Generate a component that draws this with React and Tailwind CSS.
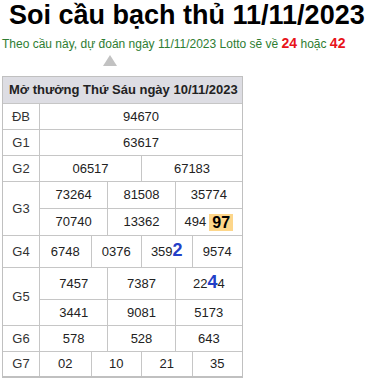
import React from "react";

const font = { fontFamily: '"Liberation Sans", Arial, sans-serif' };

function Cell({ children, first }) {
  return (
    <div
      className={
        "flex items-center justify-center text-[13px] text-[#222] " +
        (first ? "" : "border-l border-[#c6c6c6]")
      }
    >
      {children}
    </div>
  );
}

function Label({ children }) {
  return (
    <div className="w-[37px] shrink-0 border-r border-[#c6c6c6] flex items-center justify-center text-[13px] text-[#333]">
      {children}
    </div>
  );
}

function SubRow({ cols, items, h, top }) {
  const grid = { 1: "grid-cols-1", 2: "grid-cols-2", 3: "grid-cols-3", 4: "grid-cols-4" }[cols];
  return (
    <div
      className={
        "grid " + grid + " " + h + (top ? " border-t border-[#c6c6c6]" : "")
      }
    >
      {items.map((it, i) => (
        <Cell key={i} first={i === 0}>
          {it}
        </Cell>
      ))}
    </div>
  );
}

function Row({ label, cols, items, h }) {
  return (
    <div className={"flex border-t border-[#c6c6c6] " + h}>
      <Label>{label}</Label>
      <div className="flex-1">
        <SubRow cols={cols} items={items} h="h-full" />
      </div>
    </div>
  );
}

const Big = ({ children }) => (
  <span className="text-[18px] font-bold text-[#2340c8] leading-none">{children}</span>
);

export default function App() {
  return (
    <div className="bg-white w-[373px] h-[383px] overflow-hidden" style={font}>
      <div className="h-[30px] leading-[30px] text-[27px] font-bold text-black pl-[9px] whitespace-nowrap">
        Soi cầu bạch thủ 11/11/2023
      </div>
      <div className="mt-[2px] h-[22px] leading-[22px] text-[12px] text-[#2e7d32] pl-[2px] whitespace-nowrap">
        Theo cầu này, dự đoán ngày 11/11/2023 Lotto sẽ về{" "}
        <span className="text-[14px] font-bold text-[#e8141a]">24</span> hoặc{" "}
        <span className="text-[14px] font-bold text-[#e8141a]">42</span>
      </div>
      <div className="mt-[1px] ml-[103px] w-0 h-0 border-l-[7px] border-r-[7px] border-b-[11px] border-l-transparent border-r-transparent border-b-[#c2c2c2]" />
      <div className="mt-[10px] ml-[2px] w-[241px] border border-b-2 border-[#c0c0c0]">
        <div className="h-[26px] bg-[#dddde3] flex items-center pl-[6px] text-[13px] font-bold text-[#222] whitespace-nowrap">
          Mở thưởng Thứ Sáu ngày 10/11/2023
        </div>
        <Row label="ĐB" cols={1} items={["94670"]} h="h-[26px]" />
        <Row label="G1" cols={1} items={["63617"]} h="h-[26px]" />
        <Row label="G2" cols={2} items={["06517", "67183"]} h="h-[26px]" />
        <div className="flex border-t border-[#c6c6c6]">
          <Label>G3</Label>
          <div className="flex-1">
            <SubRow cols={3} items={["73264", "81508", "35774"]} h="h-[26px]" />
            <SubRow
              cols={3}
              items={[
                "70740",
                "13362",
                <span key="a" className="flex items-center">
                  494
                  <span className="ml-[3px] px-[3px] h-[17px] leading-[17px] bg-[#fdd68a] text-[16px] font-bold text-black">
                    97
                  </span>
                </span>,
              ]}
              h="h-[27px]"
              top
            />
          </div>
        </div>
        <Row
          label="G4"
          cols={4}
          items={[
            "6748",
            "0376",
            <span key="b">
              359<Big>2</Big>
            </span>,
            "9574",
          ]}
          h="h-[32px]"
        />
        <div className="flex border-t border-[#c6c6c6]">
          <Label>G5</Label>
          <div className="flex-1">
            <SubRow
              cols={3}
              items={[
                "7457",
                "7387",
                <span key="c">
                  22<Big>4</Big>4
                </span>,
              ]}
              h="h-[31px]"
            />
            <SubRow cols={3} items={["3441", "9081", "5173"]} h="h-[26px]" top />
          </div>
        </div>
        <Row label="G6" cols={3} items={["578", "528", "643"]} h="h-[26px]" />
        <Row label="G7" cols={4} items={["02", "10", "21", "35"]} h="h-[25px]" />
      </div>
    </div>
  );
}
